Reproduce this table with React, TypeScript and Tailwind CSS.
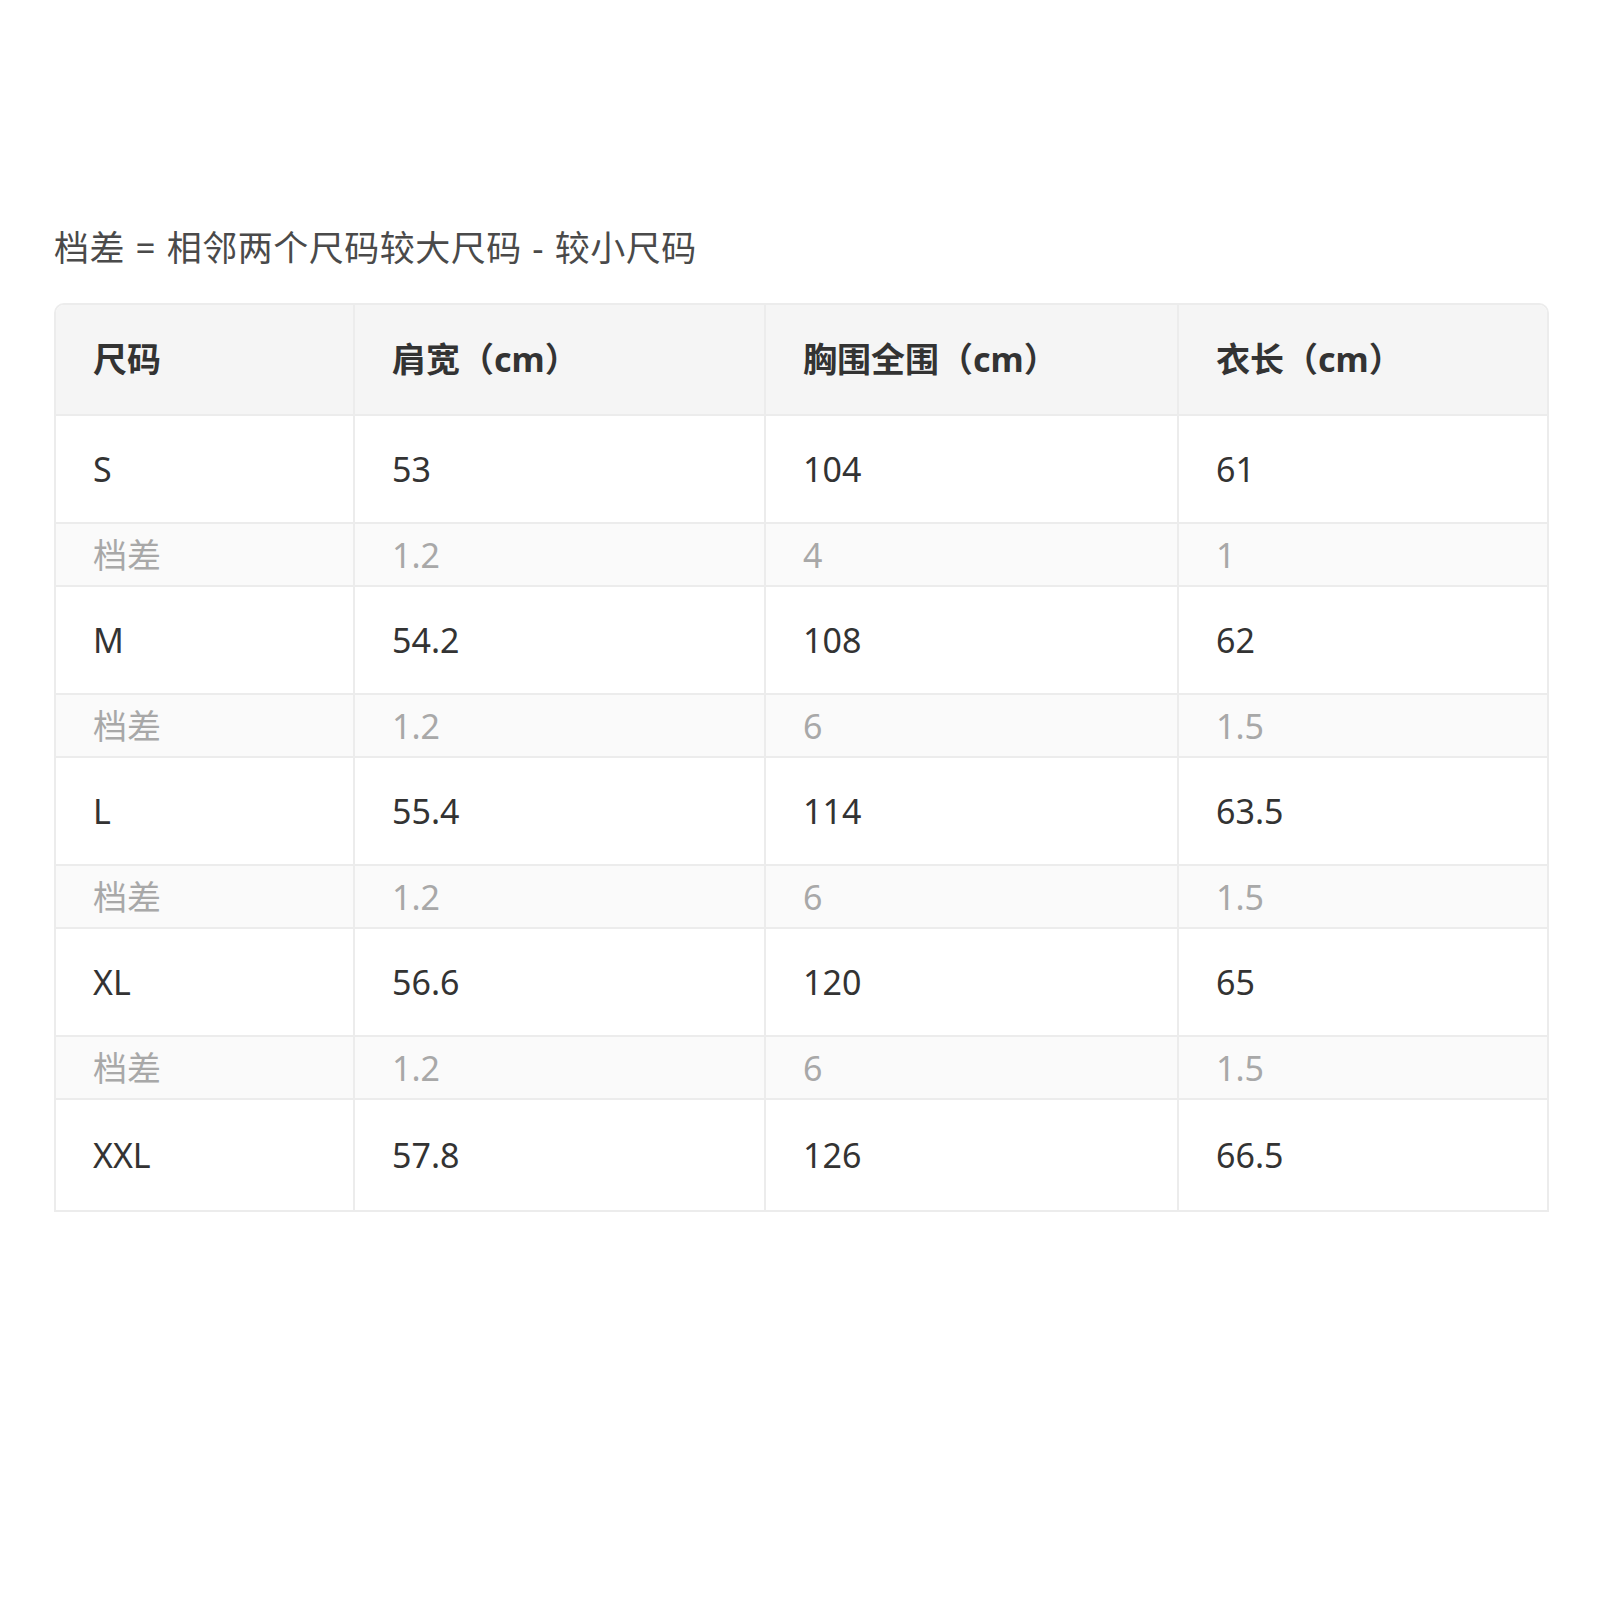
import React from 'react';

interface SizeRow {
  size: string;
  shoulder: string;
  chest: string;
  length: string;
  diff?: boolean;
}

const rows: SizeRow[] = [
  { size: 'S', shoulder: '53', chest: '104', length: '61' },
  { size: '档差', shoulder: '1.2', chest: '4', length: '1', diff: true },
  { size: 'M', shoulder: '54.2', chest: '108', length: '62' },
  { size: '档差', shoulder: '1.2', chest: '6', length: '1.5', diff: true },
  { size: 'L', shoulder: '55.4', chest: '114', length: '63.5' },
  { size: '档差', shoulder: '1.2', chest: '6', length: '1.5', diff: true },
  { size: 'XL', shoulder: '56.6', chest: '120', length: '65' },
  { size: '档差', shoulder: '1.2', chest: '6', length: '1.5', diff: true },
  { size: 'XXL', shoulder: '57.8', chest: '126', length: '66.5' },
];

const headers = ['尺码', '肩宽（cm）', '胸围全围（cm）', '衣长（cm）'];

const App = () => {
  return (
    <div
      className="min-h-[1600px] w-[1600px] bg-white pt-[222px] pl-[54px] text-[34px]"
      style={{ fontFamily: '"Noto Sans", "Noto Sans CJK SC", sans-serif' }}
    >
      <p className="mb-[30px] text-[35px] leading-[51px] tracking-[0.5px] [word-spacing:1px] text-[#4a4a4a]">
        档差 = 相邻两个尺码较大尺码 - 较小尺码
      </p>

      <div className="w-[1495px] overflow-hidden rounded-t-[10px] border-2 border-[#ececec]">
        <table className="w-full table-fixed border-collapse">
          <colgroup>
            <col className="w-[298px]" />
            <col className="w-[411px]" />
            <col className="w-[413px]" />
            <col />
          </colgroup>
          <thead>
            <tr className="h-[110px] bg-[#f5f5f5]">
              {headers.map((h, i) => (
                <th
                  key={h}
                  className={`px-[37px] text-left align-middle font-bold text-[#333] ${i > 0 ? 'border-l-2 border-[#ececec]' : ''}`}
                >
                  {h}
                </th>
              ))}
            </tr>
          </thead>
          <tbody>
            {rows.map((r, idx) => {
              const cells = [r.size, r.shoulder, r.chest, r.length];
              const last = idx === rows.length - 1;
              return (
                <tr
                  key={idx}
                  className={`border-t-2 border-[#ececec] ${
                    r.diff
                      ? 'h-[63px] bg-[#fafafa] text-[#a8a8a8]'
                      : last
                        ? 'h-[111px] bg-white text-[#333]'
                        : 'h-[108px] bg-white text-[#333]'
                  }`}
                >
                  {cells.map((c, i) => (
                    <td
                      key={i}
                      className={`px-[37px] align-middle leading-none ${i > 0 ? 'border-l-2 border-[#ececec]' : ''}`}
                    >
                      {c}
                    </td>
                  ))}
                </tr>
              );
            })}
          </tbody>
        </table>
      </div>
    </div>
  );
};

export default App;
